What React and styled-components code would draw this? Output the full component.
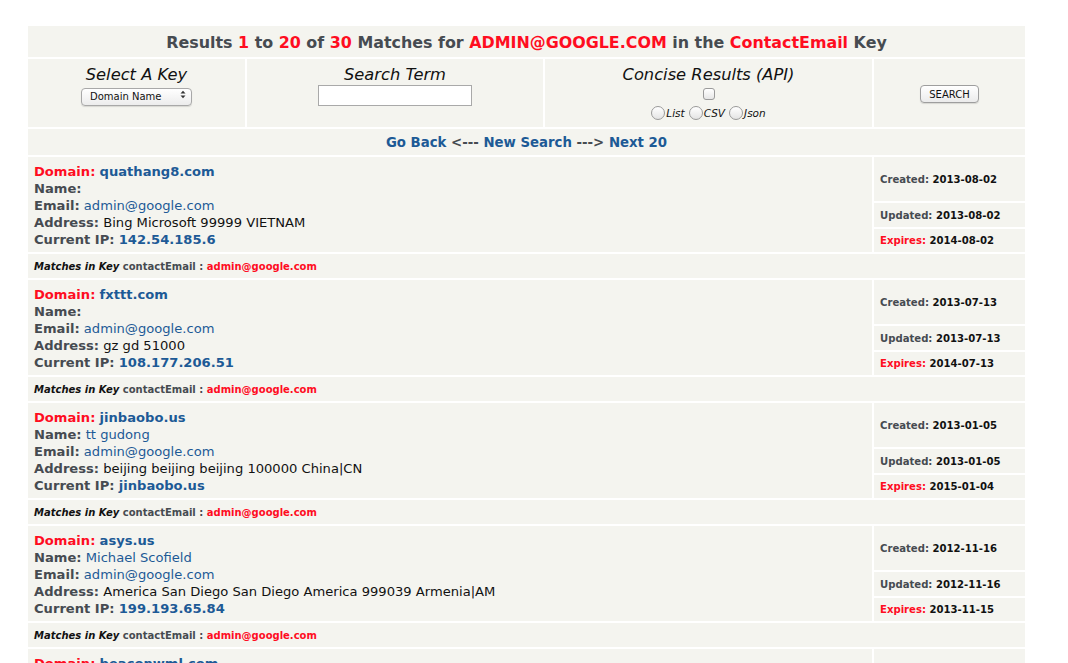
import React from "react";
import styled, { createGlobalStyle } from "styled-components";

const Global = createGlobalStyle`
  html, body { margin: 0; padding: 0; background: #ffffff; }
  body { font-family: "DejaVu Sans", Verdana, sans-serif; }
`;

const CELL = "#f4f4ef";
const RED = "#ff0d1f";
const BLUE = "#1d5a96";
const GRAY = "#464b51";

const Page = styled.div`
  padding: 26px 0 40px 28px;
`;

const Board = styled.div`
  width: 997px;
  display: flex;
  flex-direction: column;
  gap: 2px;
`;

const TitleCell = styled.div`
  background: ${CELL};
  height: 31px;
  display: flex;
  align-items: center;
  justify-content: center;
  padding-top: 1px;
  box-sizing: border-box;
  font-weight: bold;
  font-size: 15.9px;
  color: ${GRAY};
  white-space: nowrap;
`;

const Red = styled.span`
  color: ${RED};
`;

const FormRow = styled.div`
  display: grid;
  grid-template-columns: 217px 296px 327px 151px;
  gap: 2px;
  height: 68px;
`;

const FormCell = styled.div`
  background: ${CELL};
  display: flex;
  flex-direction: column;
  align-items: center;
  justify-content: ${(p) => (p.$center ? "center" : "flex-start")};
  padding-top: ${(p) => (p.$center ? "0" : "7px")};
`;

const FieldLabel = styled.div`
  font-style: italic;
  font-size: 16.3px;
  line-height: 18px;
  color: #111;
`;

const SelectWrap = styled.span`
  position: relative;
  display: inline-block;
  margin-top: 1px;
`;

const Select = styled.select`
  appearance: none;
  -webkit-appearance: none;
  width: 111px;
  height: 18px;
  border: 1px solid #a8a8a8;
  border-radius: 4px;
  background: linear-gradient(#ffffff, #ececec);
  font-family: "DejaVu Sans", Verdana, sans-serif;
  font-size: 10px;
  color: #111;
  padding: 0 0 0 8px;
  box-shadow: 0 1px 1px rgba(0, 0, 0, 0.12);
  outline: none;
`;

const SelectArrows = styled.svg`
  position: absolute;
  right: 6px;
  top: 5px;
  pointer-events: none;
`;

const TextInput = styled.input`
  width: 154px;
  height: 21px;
  box-sizing: border-box;
  margin-top: 1px;
  border: 1px solid #a9a9a9;
  background: #fff;
  outline: none;
`;

const CheckBox = styled.input`
  appearance: none;
  -webkit-appearance: none;
  width: 12px;
  height: 12px;
  margin: 4px 0 0 0;
  border: 1px solid #9a9a9a;
  border-radius: 3px;
  background: linear-gradient(#ffffff, #e6e6e6);
  box-sizing: border-box;
`;

const RadioRow = styled.div`
  display: flex;
  align-items: center;
  margin-top: 6px;
  font-size: 10.5px;
  font-style: italic;
  color: #111;
`;

const Radio = styled.input`
  appearance: none;
  -webkit-appearance: none;
  width: 14px;
  height: 14px;
  margin: 0 1px 0 4px;
  border: 1px solid #9a9a9a;
  border-radius: 50%;
  background: linear-gradient(#ffffff, #e4e4e4);
  box-sizing: border-box;
  &:first-child {
    margin-left: 0;
  }
`;

const SearchButton = styled.button`
  height: 18px;
  padding: 0 8px;
  border: 1px solid #9e9e9e;
  border-radius: 4px;
  background: linear-gradient(#ffffff, #ebebeb);
  font-family: "DejaVu Sans", Verdana, sans-serif;
  font-size: 10px;
  color: #111;
  box-shadow: 0 1px 1px rgba(0, 0, 0, 0.12);
  margin-top: 2px;
`;

const NavCell = styled.div`
  background: ${CELL};
  height: 26px;
  display: flex;
  align-items: center;
  justify-content: center;
  font-weight: bold;
  font-size: 13.3px;
  color: ${GRAY};
  white-space: pre;
`;

const Link = styled.a`
  color: ${BLUE};
  text-decoration: none;
  font-weight: ${(p) => (p.$bold ? "bold" : "normal")};
`;

const Record = styled.div`
  display: grid;
  grid-template-columns: 1fr 151px;
  grid-template-rows: 44px 24px 23px 24px;
  gap: 2px;
`;

const InfoCell = styled.div`
  grid-row: 1 / 4;
  background: ${CELL};
  padding: 6px 6px 4px;
  font-size: 13.1px;
  line-height: 17px;
  color: #111;
`;

const InfoLine = styled.div`
  white-space: nowrap;
`;

const Label = styled.span`
  font-weight: bold;
  color: ${(p) => (p.$red ? RED : GRAY)};
`;

const DateCell = styled.div`
  background: ${CELL};
  display: flex;
  align-items: center;
  padding-left: 6px;
  font-size: 10.1px;
  font-weight: bold;
  color: #111;
  white-space: pre;
`;

const DateLabel = styled.span`
  color: ${(p) => (p.$red ? RED : GRAY)};
`;

const MatchCell = styled.div`
  grid-column: 1 / 3;
  background: ${CELL};
  display: flex;
  align-items: center;
  padding-left: 6px;
  font-size: 10px;
  font-weight: bold;
  color: ${GRAY};
  white-space: pre;
`;

const MatchKey = styled.span`
  font-style: italic;
  color: #111;
`;

const records = [
  {
    domain: "quathang8.com",
    name: "",
    address: "Bing Microsoft 99999 VIETNAM",
    ip: "142.54.185.6",
    created: "2013-08-02",
    updated: "2013-08-02",
    expires: "2014-08-02",
  },
  {
    domain: "fxttt.com",
    name: "",
    address: "gz gd 51000",
    ip: "108.177.206.51",
    created: "2013-07-13",
    updated: "2013-07-13",
    expires: "2014-07-13",
  },
  {
    domain: "jinbaobo.us",
    name: "tt gudong",
    address: "beijing beijing beijing 100000 China|CN",
    ip: "jinbaobo.us",
    created: "2013-01-05",
    updated: "2013-01-05",
    expires: "2015-01-04",
  },
  {
    domain: "asys.us",
    name: "Michael Scofield",
    address: "America San Diego San Diego America 999039 Armenia|AM",
    ip: "199.193.65.84",
    created: "2012-11-16",
    updated: "2012-11-16",
    expires: "2013-11-15",
  },
  {
    domain: "beaconwml.com",
    name: "",
    address: "Beijing 100000 China|CN",
    ip: "199.59.243.120",
    created: "2012-10-22",
    updated: "2012-10-22",
    expires: "2013-10-22",
  },
];

function RecordBlock({ r }) {
  return (
    <Record>
      <InfoCell>
        <InfoLine>
          <Label $red>Domain:</Label> <Link $bold href="#">{r.domain}</Link>
        </InfoLine>
        <InfoLine>
          <Label>Name:</Label> {r.name && <Link href="#">{r.name}</Link>}
        </InfoLine>
        <InfoLine>
          <Label>Email:</Label> <Link href="#">admin@google.com</Link>
        </InfoLine>
        <InfoLine>
          <Label>Address:</Label> {r.address}
        </InfoLine>
        <InfoLine>
          <Label>Current IP:</Label> <Link $bold href="#">{r.ip}</Link>
        </InfoLine>
      </InfoCell>
      <DateCell>
        <DateLabel>Created: </DateLabel>
        {r.created}
      </DateCell>
      <DateCell>
        <DateLabel>Updated: </DateLabel>
        {r.updated}
      </DateCell>
      <DateCell>
        <DateLabel $red>Expires: </DateLabel>
        {r.expires}
      </DateCell>
      <MatchCell>
        <MatchKey>Matches in Key</MatchKey> contactEmail : <Red>admin@google.com</Red>
      </MatchCell>
    </Record>
  );
}

export default function App() {
  return (
    <>
      <Global />
      <Page>
        <Board>
          <TitleCell>
            Results&nbsp;<Red>1</Red>&nbsp;to&nbsp;<Red>20</Red>&nbsp;of&nbsp;<Red>30</Red>
            &nbsp;Matches for&nbsp;<Red>ADMIN@GOOGLE.COM</Red>&nbsp;in the&nbsp;
            <Red>ContactEmail</Red>&nbsp;Key
          </TitleCell>
          <FormRow>
            <FormCell>
              <FieldLabel>Select A Key</FieldLabel>
              <SelectWrap>
                <Select defaultValue="domain">
                  <option value="domain">Domain Name</option>
                </Select>
                <SelectArrows width="6" height="9" viewBox="0 0 6 9">
                  <path d="M0.5 3.5 L3 0.8 L5.5 3.5 Z" fill="#333" />
                  <path d="M0.5 5.5 L3 8.2 L5.5 5.5 Z" fill="#333" />
                </SelectArrows>
              </SelectWrap>
            </FormCell>
            <FormCell>
              <FieldLabel>Search Term</FieldLabel>
              <TextInput type="text" />
            </FormCell>
            <FormCell>
              <FieldLabel>Concise Results (API)</FieldLabel>
              <CheckBox type="checkbox" />
              <RadioRow>
                <Radio type="radio" name="fmt" />
                List
                <Radio type="radio" name="fmt" />
                CSV
                <Radio type="radio" name="fmt" />
                Json
              </RadioRow>
            </FormCell>
            <FormCell $center>
              <SearchButton>SEARCH</SearchButton>
            </FormCell>
          </FormRow>
          <NavCell>
            <Link $bold href="#">Go Back</Link>
            {" <--- "}
            <Link $bold href="#">New Search</Link>
            {" ---> "}
            <Link $bold href="#">Next 20</Link>
          </NavCell>
          {records.map((r) => (
            <RecordBlock key={r.domain} r={r} />
          ))}
        </Board>
      </Page>
    </>
  );
}
